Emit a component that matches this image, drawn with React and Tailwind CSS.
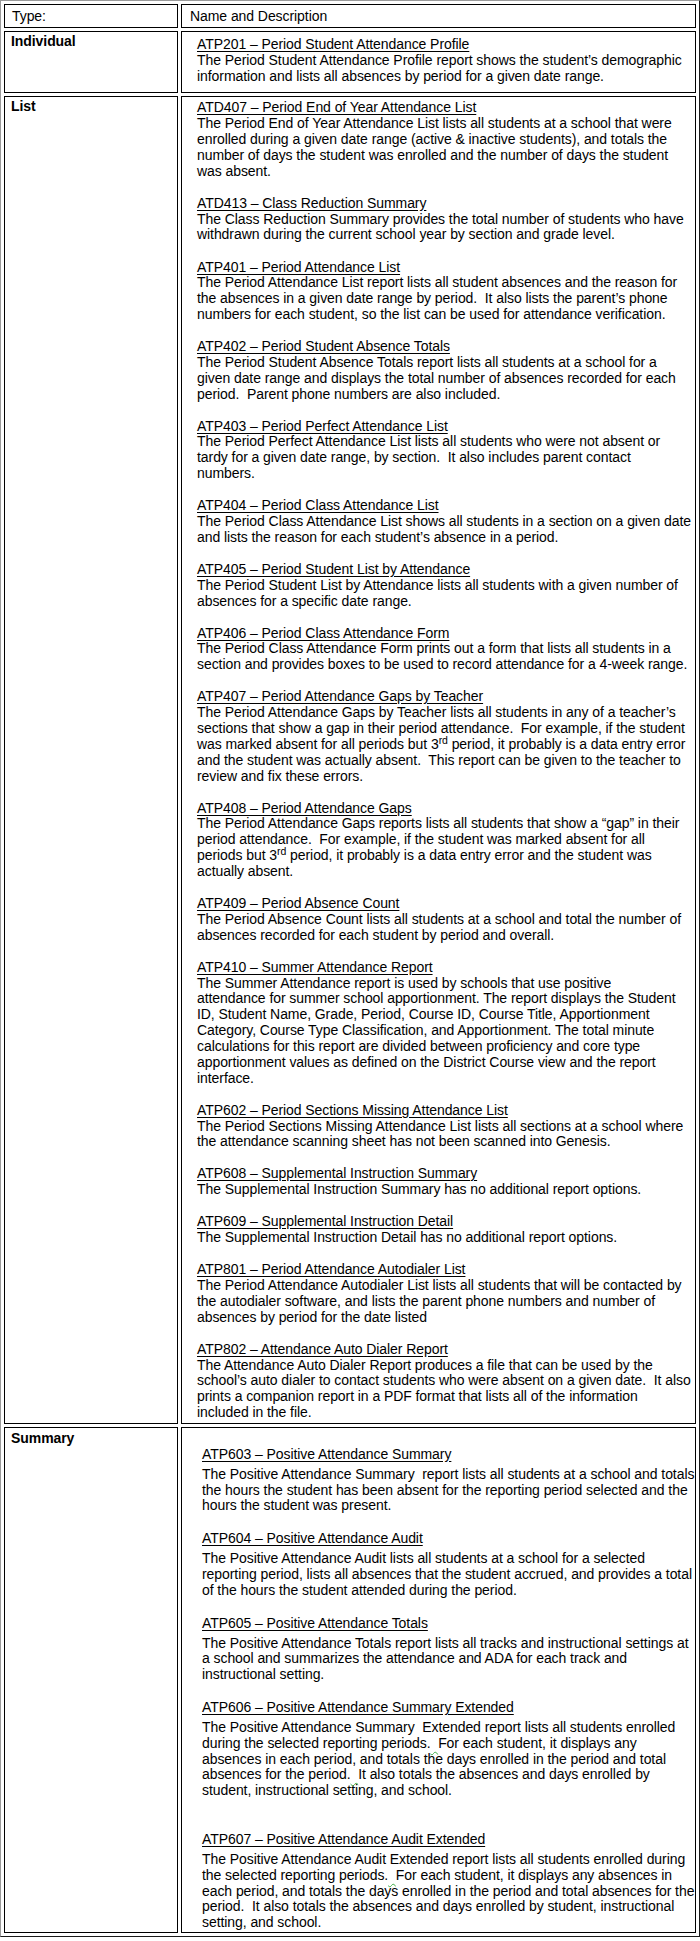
import React from "react";

// Attendance report catalogue table
const Squig = () => (
  <span className="underline decoration-wavy decoration-[#3fae49] decoration-1 underline-offset-[3px]">{"  "}</span>
);

const individual = [
  {
    title: "ATP201 – Period Student Attendance Profile",
    lines: [
      "The Period Student Attendance Profile report shows the student’s demographic",
      "information and lists all absences by period for a given date range.",
    ],
  },
];

const listReports = [
  {
    title: "ATD407 – Period End of Year Attendance List",
    lines: [
      "The Period End of Year Attendance List lists all students at a school that were",
      "enrolled during a given date range (active & inactive students), and totals the",
      "number of days the student was enrolled and the number of days the student",
      "was absent.",
    ],
  },
  {
    title: "ATD413 – Class Reduction Summary",
    lines: [
      "The Class Reduction Summary provides the total number of students who have",
      "withdrawn during the current school year by section and grade level.",
    ],
  },
  {
    title: "ATP401 – Period Attendance List",
    lines: [
      "The Period Attendance List report lists all student absences and the reason for",
      "the absences in a given date range by period.  It also lists the parent’s phone",
      "numbers for each student, so the list can be used for attendance verification.",
    ],
  },
  {
    title: "ATP402 – Period Student Absence Totals",
    lines: [
      "The Period Student Absence Totals report lists all students at a school for a",
      "given date range and displays the total number of absences recorded for each",
      "period.  Parent phone numbers are also included.",
    ],
  },
  {
    title: "ATP403 – Period Perfect Attendance List",
    lines: [
      "The Period Perfect Attendance List lists all students who were not absent or",
      "tardy for a given date range, by section.  It also includes parent contact",
      "numbers.",
    ],
  },
  {
    title: "ATP404 – Period Class Attendance List",
    lines: [
      "The Period Class Attendance List shows all students in a section on a given date",
      "and lists the reason for each student’s absence in a period.",
    ],
  },
  {
    title: "ATP405 – Period Student List by Attendance",
    lines: [
      "The Period Student List by Attendance lists all students with a given number of",
      "absences for a specific date range.",
    ],
  },
  {
    title: "ATP406 – Period Class Attendance Form",
    lines: [
      "The Period Class Attendance Form prints out a form that lists all students in a",
      "section and provides boxes to be used to record attendance for a 4-week range.",
    ],
  },
  {
    title: "ATP407 – Period Attendance Gaps by Teacher",
    lines: [
      "The Period Attendance Gaps by Teacher lists all students in any of a teacher’s",
      "sections that show a gap in their period attendance.  For example, if the student",
      <>was marked absent for all periods but 3<sup>rd</sup> period, it probably is a data entry error</>,
      "and the student was actually absent.  This report can be given to the teacher to",
      "review and fix these errors.",
    ],
  },
  {
    title: "ATP408 – Period Attendance Gaps",
    lines: [
      "The Period Attendance Gaps reports lists all students that show a “gap” in their",
      "period attendance.  For example, if the student was marked absent for all",
      <>periods but 3<sup>rd</sup> period, it probably is a data entry error and the student was</>,
      "actually absent.",
    ],
  },
  {
    title: "ATP409 – Period Absence Count",
    lines: [
      "The Period Absence Count lists all students at a school and total the number of",
      "absences recorded for each student by period and overall.",
    ],
  },
  {
    title: "ATP410 – Summer Attendance Report",
    lines: [
      "The Summer Attendance report is used by schools that use positive",
      "attendance for summer school apportionment. The report displays the Student",
      "ID, Student Name, Grade, Period, Course ID, Course Title, Apportionment",
      "Category, Course Type Classification, and Apportionment. The total minute",
      "calculations for this report are divided between proficiency and core type",
      "apportionment values as defined on the District Course view and the report",
      "interface.",
    ],
  },
  {
    title: "ATP602 – Period Sections Missing Attendance List",
    lines: [
      "The Period Sections Missing Attendance List lists all sections at a school where",
      "the attendance scanning sheet has not been scanned into Genesis.",
    ],
  },
  {
    title: "ATP608 – Supplemental Instruction Summary",
    lines: ["The Supplemental Instruction Summary has no additional report options."],
  },
  {
    title: "ATP609 – Supplemental Instruction Detail",
    lines: ["The Supplemental Instruction Detail has no additional report options."],
  },
  {
    title: "ATP801 – Period Attendance Autodialer List",
    lines: [
      "The Period Attendance Autodialer List lists all students that will be contacted by",
      "the autodialer software, and lists the parent phone numbers and number of",
      "absences by period for the date listed",
    ],
  },
  {
    title: "ATP802 – Attendance Auto Dialer Report",
    lines: [
      "The Attendance Auto Dialer Report produces a file that can be used by the",
      "school’s auto dialer to contact students who were absent on a given date.  It also",
      "prints a companion report in a PDF format that lists all of the information",
      "included in the file.",
    ],
  },
];

const summaryReports = [
  {
    title: "ATP603 – Positive Attendance Summary",
    lines: [
      "The Positive Attendance Summary  report lists all students at a school and totals",
      "the hours the student has been absent for the reporting period selected and the",
      "hours the student was present.",
    ],
  },
  {
    title: "ATP604 – Positive Attendance Audit",
    lines: [
      "The Positive Attendance Audit lists all students at a school for a selected",
      "reporting period, lists all absences that the student accrued, and provides a total",
      "of the hours the student attended during the period.",
    ],
  },
  {
    title: "ATP605 – Positive Attendance Totals",
    lines: [
      "The Positive Attendance Totals report lists all tracks and instructional settings at",
      "a school and summarizes the attendance and ADA for each track and",
      "instructional setting.",
    ],
  },
  {
    title: "ATP606 – Positive Attendance Summary Extended",
    lines: [
      "The Positive Attendance Summary  Extended report lists all students enrolled",
      <>during the selected reporting periods.<Squig />For each student, it displays any</>,
      "absences in each period, and totals the days enrolled in the period and total",
      <>absences for the period.<Squig />It also totals the absences and days enrolled by</>,
      "student, instructional setting, and school.",
    ],
  },
  {
    title: "ATP607 – Positive Attendance Audit Extended",
    lines: [
      "The Positive Attendance Audit Extended report lists all students enrolled during",
      <>the selected reporting periods.<Squig />For each student, it displays any absences in</>,
      "each period, and totals the days enrolled in the period and total absences for the",
      "period.  It also totals the absences and days enrolled by student, instructional",
      "setting, and school.",
    ],
  },
];

const Entry = ({ title, lines, titleGap = "" }) => (
  <div>
    <div className={`underline underline-offset-[2px] ${titleGap}`}>{title}</div>
    {lines.map((line, i) => (
      <div key={i}>{line}</div>
    ))}
  </div>
);

export default function App() {
  return (
    <div className="bg-white w-[700px] text-black font-['Liberation_Sans',Arial,sans-serif] text-[14px] leading-[15.85px] tracking-[-0.07px] whitespace-pre">
      <table className="w-[700px] table-fixed border-separate border-spacing-[3px] border border-t-[#9a9a9a] border-l-[#9a9a9a] border-r-[#1a1a1a] border-b-[#1a1a1a]">
        <tbody>
          <tr>
            <td className="w-[174px] border border-black align-top pl-[7px] pt-[4px] pb-[2px]">Type:</td>
            <td className="border border-black align-top pl-[8px] pt-[4px] pb-[2px]">Name and Description</td>
          </tr>

          <tr>
            <td className="border border-black align-top pl-[6px] pt-[2px] font-bold">Individual</td>
            <td className="border border-black align-top pl-[15px] pt-[5px] pb-[8px]">
              {individual.map((r) => (
                <Entry key={r.title} {...r} />
              ))}
            </td>
          </tr>

          <tr>
            <td className="border border-black align-top pl-[6px] pt-[2px] font-bold">List</td>
            <td className="border border-black align-top pl-[15px] pt-[3px] pb-[2px]">
              <div className="flex flex-col gap-[16.2px]">
                {listReports.map((r) => (
                  <Entry key={r.title} {...r} />
                ))}
              </div>
            </td>
          </tr>

          <tr>
            <td className="border border-black align-top pl-[6px] pt-[3px] font-bold">Summary</td>
            <td className="border border-black align-top pl-[20px] pt-[19px] pb-[1px]">
              <div className="flex flex-col gap-[17px]">
                {summaryReports.slice(0, 4).map((r) => (
                  <Entry key={r.title} {...r} titleGap="mb-[4px]" />
                ))}
                <div className="mt-[16px]">
                  <Entry {...summaryReports[4]} titleGap="mb-[4px]" />
                </div>
              </div>
            </td>
          </tr>
        </tbody>
      </table>
    </div>
  );
}
